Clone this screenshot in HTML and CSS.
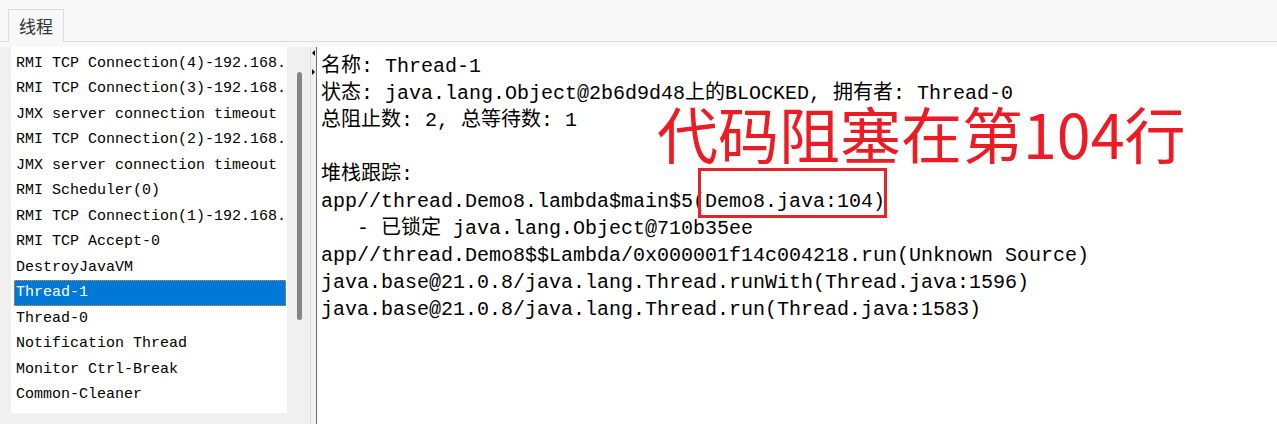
FILE: index.html
```html
<!DOCTYPE html>
<html lang="zh-CN">
<head>
    <meta charset="UTF-8">
    <meta name="viewport" content="width=device-width, initial-scale=1.0">
    <title>线程</title>
    <link rel="stylesheet" href="styles.css">
</head>
<body>
    <div class="tab-bar">
        <div class="tab">线程</div>
    </div>
    <div class="workspace">
        <div class="thread-pane">
            <ul class="thread-list">
                <li>RMI TCP Connection(4)-192.168.</li>
                <li>RMI TCP Connection(3)-192.168.</li>
                <li>JMX server connection timeout</li>
                <li>RMI TCP Connection(2)-192.168.</li>
                <li>JMX server connection timeout</li>
                <li>RMI Scheduler(0)</li>
                <li>RMI TCP Connection(1)-192.168.</li>
                <li>RMI TCP Accept-0</li>
                <li>DestroyJavaVM</li>
                <li class="selected">Thread-1</li>
                <li>Thread-0</li>
                <li>Notification Thread</li>
                <li>Monitor Ctrl-Break</li>
                <li>Common-Cleaner</li>
                <li>Attach Listener</li>
            </ul>
            <div class="scrollbar">
                <div class="thumb"></div>
            </div>
        </div>
        <div class="splitter">
            <span class="arrow-left"></span>
            <span class="arrow-right"></span>
        </div>
        <div class="detail">
<pre class="detail-text">名称: Thread-1
状态: java.lang.Object@2b6d9d48上的BLOCKED, 拥有者: Thread-0
总阻止数: 2, 总等待数: 1

堆栈跟踪:
app//thread.Demo8.lambda$main$5(Demo8.java:104)
   - 已锁定 java.lang.Object@710b35ee
app//thread.Demo8$$Lambda/0x000001f14c004218.run(Unknown Source)
java.base@21.0.8/java.lang.Thread.runWith(Thread.java:1596)
java.base@21.0.8/java.lang.Thread.run(Thread.java:1583)</pre>
            <div class="note">代码阻塞在第104行</div>
            <div class="note-box"></div>
        </div>
    </div>
</body>
</html>
```

FILE: styles.css
```css
body {
    margin: 0;
    width: 1277px;
    height: 424px;
    overflow: hidden;
    background-color: #f8f8f8;
    font-family: "Liberation Mono", "Noto Sans CJK SC", monospace;
}

.tab-bar {
    height: 41px;
    padding-left: 8px;
    border-bottom: 1px solid #dcdcdc;
    display: flex;
    align-items: flex-end;
}

.tab {
    width: 54px;
    height: 32px;
    margin-bottom: -1px;
    border: 1px solid #dcdcdc;
    border-bottom: none;
    background-color: #f8f8f8;
    font-family: "Noto Sans CJK SC", sans-serif;
    font-size: 17px;
    line-height: 31px;
    color: #333;
    text-align: center;
}

.workspace {
    display: flex;
    height: 382px;
    padding-top: 5px;
    box-sizing: border-box;
}

.thread-pane {
    display: flex;
    width: 299px;
    padding-left: 11px;
    background-color: #f0f0f0;
    border-right: 1px solid #dadada;
}

.thread-list {
    width: 276px;
    height: 366px;
    margin: 0;
    padding: 3.5px 0 0 0;
    box-sizing: border-box;
    list-style: none;
    background-color: #fff;
    overflow: hidden;
    font-size: 15px;
    color: #000;
}

.thread-list li {
    height: 25.5px;
    line-height: 25.5px;
    margin: 0 1px 0 3px;
    padding-left: 2px;
    white-space: pre;
    overflow: hidden;
}

.thread-list li.selected {
    background-color: #0078d7;
    color: #fff;
    outline: 1px dotted #f08c28;
    outline-offset: -1px;
}

.scrollbar {
    position: relative;
    width: 23px;
}

.thumb {
    position: absolute;
    top: 25px;
    left: 10px;
    width: 5px;
    height: 248px;
    border-radius: 3px;
    background-color: #868686;
}

.splitter {
    width: 6px;
    display: flex;
    flex-direction: column;
    align-items: center;
    gap: 13px;
    padding-top: 3px;
    box-sizing: border-box;
    background-color: #f0f0f0;
    border-right: 1px solid #6e6e6e;
}

.arrow-left {
    width: 0;
    height: 0;
    border-top: 3px solid transparent;
    border-bottom: 3px solid transparent;
    border-right: 3px solid #000;
}

.arrow-right {
    width: 0;
    height: 0;
    border-top: 3px solid transparent;
    border-bottom: 3px solid transparent;
    border-left: 3px solid #000;
}

.detail {
    position: relative;
    flex: 1;
    background-color: #fff;
}

.detail-text {
    margin: 0;
    padding: 6px 0 0 4px;
    font-family: "Liberation Mono", "Noto Sans CJK SC", monospace;
    font-size: 20px;
    line-height: 27px;
    color: #000;
}

.note {
    position: absolute;
    left: 340px;
    top: 61px;
    font-family: "Noto Sans CJK SC", sans-serif;
    font-size: 61px;
    line-height: 50px;
    color: #ed1c24;
    white-space: nowrap;
}

.note-box {
    position: absolute;
    left: 381px;
    top: 121px;
    width: 183px;
    height: 44px;
    border: 3px solid #e8222a;
}
```
